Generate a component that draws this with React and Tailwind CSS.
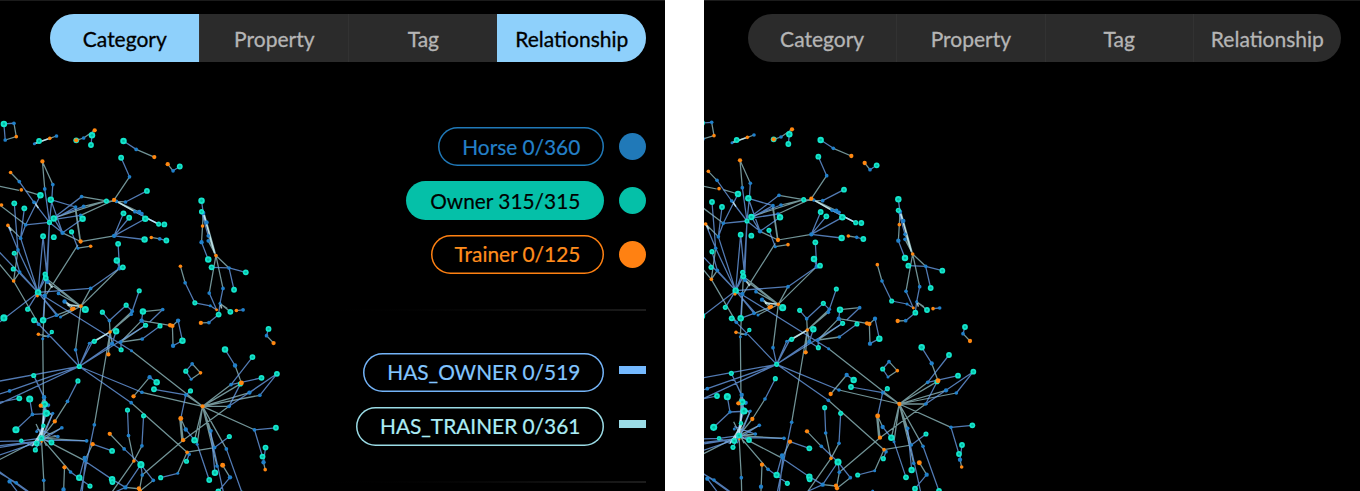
import React from "react";

// Edges are "x1 y1 x2 y2 [x3 y3 ...]" polylines.
const BLUE_EDGES = `
5 39 35 37|5 39 9 87|268 73 265 102|362 90 400 115|355 140 380 197|510 179 530 166
127 233 141 333|151 220 148 265 141 333|51 211 95 273 141 333|114 252 70 340|36 276 47 415|66 291 55 380|70 340 141 333|70 340 55 380
55 380 107 542|47 415 107 542|17 342 47 415|151 321 237 256|151 321 243 285|151 325 219 287|151 325 234 312|145 265 219 287|145 265 180 364|154 321 180 364|240 322 180 364|141 333 180 364
368 272 432 239|396 301 467 338|207 361 226 410|334 373 362 306|334 373 379 319|334 373 427 322|334 373 425 384|470 382 490 387
122 374 135 510|141 333 134 505|141 333 131 500|346 397 350 470|342 447 350 470|350 470 264 530|350 470 360 467|264 530 107 542
36 425 52 481|33 472 52 481|52 481 107 542|-10 420 107 542|128 487 107 542|130 499 107 542|107 542 76 592|107 542 -10 632|107 542 162 610|107 542 168 612|107 542 386 716|127 552 122 625|122 625 162 610|95 625 109 637|109 637 230 763|137 673 148 660|122 374 107 542
219 713 230 763|230 763 260 694|230 763 268 692|230 763 328 695|230 763 428 640|230 763 -10 807|230 763 22 836 -10 846|230 763 -10 875|230 763 417 840|230 763 385 871
320 626 299 601|320 626 370 580|388 598 409 537|385 607 409 537|370 580 388 598|328 695 340 658|354 690 355 713|328 695 355 713|418 681 471 642|420 599 416 626|416 626 428 640|479 593 440 630|525 626 538 686|510 701 538 686
595 268 600 305|595 301 610 333|595 392 615 444|625 467 677 469|677 469 727 482|677 469 692 534|618 544 640 594|659 530 650 575|650 575 646 608|646 608 617 632|699 596 719 594|546 513 575 573|575 573 621 582 640 594|595 301 615 373
795 651 789 671|665 712 695 760|747 735 683 817|774 797 683 817|820 785 769 849|820 785 677 882|820 785 738 841|711 815 677 882|567 755 548 777|548 777 564 801
753 952 817 946|753 952 777 1032|786 1005 780 1049|582 995 618 1102|623 955 635 1080|669 1009 717 1143|620 955 662 1146|634 1005 678 972|558 1025 550 1046|524 1082 473 1095
453 831 548 848|562 836 548 848|548 848 533 918|548 951 574 983|440 795 461 810|374 893 377 969|422 910 417 1000|364 1009 414 1056|414 1056 451 1103|414 1056 418 1087|414 1056 368 1124
226 806 195 867|94 790 125 855|94 790 138 885|82 860 90 906 41 952|90 906 150 903|51 858 -10 870|125 855 132 903|127 876 117 977|132 903 103 993|57 985 117 977|99 1012 117 977|147 990 117 977|252 985 135 983|270 995 328 1015|242 1042 328 1100|246 1036 230 1095|204 1078 262 1120|328 1100 368 1124|368 1124 325 1143|275 937 232 1146|248 1044 238 1146
57 985 -10 987|117 985 -10 1000|117 985 -10 1005|117 985 -10 1028|-10 1076 88 1146|-10 1080 42 1110 92 1146|22 1106 52 1146|178 946 103 993|166 972 103 950|151 903 112 1000|57 985 90 1000 117 977|680 1094 645 1136`;

const PALE_EDGES = `
35 37 42 77|42 77 9 87|96 98 142 82|142 82 162 75|221 88 243 81|243 81 276 58|400 115 454 138|380 197 334 266|494 159 510 179
120 151 127 233|120 151 151 220|25 184 51 211|-10 225 50 237|70 239 114 252|-10 279 70 340|17 342 55 380|237 256 311 269|243 285 311 269|234 312 334 266|151 321 311 269|311 269 368 272|334 266 396 301|334 266 409 302|409 302 427 322|396 301 467 338
219 287 234 390|217 287 232 385|180 364 234 390|226 410 264 404|234 390 334 373|226 400 132 548|445 378 470 382|350 470 235 583|264 530 235 583
52 481 34 508|47 415 34 508|-10 455 34 508|34 508 109 637|135 510 235 583|130 499 235 583|168 545 235 583|186 569 209 592|162 610 209 592|174 615 235 583|235 583 195 577|130 500 124 625|124 625 121 680|121 680 123 860|108 667 137 673
235 583 219 713|322 660 320 626|322 660 385 607|322 660 388 598|322 660 260 694|322 660 275 688|322 660 317 727|322 660 328 695|322 660 275 937|354 690 416 626|354 690 428 640|354 690 418 681|420 599 479 593|416 626 501 640|508 642 525 626|508 642 510 701
386 716 598 882|417 840 598 882|385 871 552 1019|598 344 595 392|600 305 638 432|604 310 638 432|610 333 638 432|615 373 638 432|615 388 638 432|600 305 598 344|638 432 677 469|638 432 659 530|638 432 618 544|650 575 681 600|650 575 672 590|617 632 593 633|532 464 546 513|789 671 810 693
695 760 714 812|683 817 598 882|738 841 598 882|769 849 598 882|683 882 598 882|677 882 540 983|711 815 598 882|567 755 592 782|592 782 564 801|598 882 753 952|598 882 574 983|598 882 582 995|598 882 623 955|598 882 641 1060|598 882 669 1009|598 882 634 1005|598 882 548 848|552 1019 634 1005|552 1019 558 1025|552 1019 524 1082|533 918 548 951|533 918 540 983|530 918 536 983|540 983 418 1087 410 1130|780 1049 785 1071
392 852 440 795|377 969 393 1045|417 1000 393 1045|321 964 364 1009|393 1045 322 1146|418 1087 410 1130|451 1103 411 1135|368 1124 408 1128|195 867 157 927|157 927 117 977|117 977 252 985|117 977 242 1042|117 977 204 1078|117 977 124 1103 125 1146|117 977 178 946|117 977 166 972|117 977 151 903|117 977 125 855|117 977 -10 1042|120 977 128 850|186 1064 183 1143|270 995 248 1040|115 880 125 855|115 880 150 910|658 1058 680 1094|123 860 123 977|101 935 132 1000`;

const BRIGHT_EDGES = `96 98 142 82|334 266 396 301|425 317 467 338|602 310 634 425|322 660 275 688|190 570 209 585|195 580 235 583|123 940 103 993|90 1000 125 945|95 270 108 290|117 977 126 900|17 342 27 358|135 510 150 528|650 572 655 590`;

// Nodes are "x y radius" triples.
const TEAL_NODES = `5 39 9|110 90 8|221 88 8|268 73 9|265 102 8|362 90 9|355 140 8|530 166 8|114 252 9|145 265 9|36 276 8|66 291 8|141 333 7|154 321 9|311 269 7|432 239 8|240 322 9|362 306 8|379 319 8|427 322 9|425 384 9|467 338 7|484 339 8|490 387 8|207 361 7|122 374 8|154 377 8|346 397 8|342 447 9|360 467 8|36 425 7|33 472 7|128 487 7|130 499 8|107 542 9|76 592 7|5 618 10|95 625 8|122 625 9|248 593 10|148 660 6|230 763 7|275 688 7|299 601 7|370 580 7|409 537 7|340 658 9|355 713 7|420 599 9|428 640 7|471 642 7|538 686 9|595 268 9|595 301 7|615 444 9|625 467 8|727 482 8|692 534 8|646 608 8|681 600 8|575 573 7|795 651 8|665 712 9|747 735 8|774 797 8|820 785 8|711 815 7|548 777 7|562 836 7|453 831 8|461 810 9|817 946 8|786 1005 8|777 1032 8|618 1102 8|574 983 9|635 1080 9|678 972 7|550 1046 7|473 1095 7|374 893 7|422 910 7|414 1056 10|226 806 7|94 790 7|82 860 10|41 952 10|51 858 8|127 876 9|132 903 10|123 940 6|117 977 8|147 990 8|57 985 6|103 993 8|99 1012 7|328 1015 8|328 1100 9|329 1108 8|230 1095 9|262 1120 7|645 1136 8|717 1143 8`;

const BLUE_NODES = `35 37 5|9 87 5|96 98 4|162 75 5|243 81 5|400 115 5|380 197 5|510 179 5|127 233 5|151 220 5|51 211 5|95 273 5|70 340 5|55 380 5|47 415 5|237 256 5|243 285 5|219 287 5|234 312 5|368 272 5|341 270 5|396 301 5|409 302 6|417 307 5|180 364 6|226 410 4|334 373 6|470 382 5|350 470 6|264 530 5|52 481 5|135 510 6|127 552 6|168 545 5|186 569 6|162 610 5|174 615 4|109 637 5|121 680 4|137 673 4|219 713 5|260 694 4|270 690 4|320 626 5|328 695 6|354 690 5|388 598 5|385 607 5|418 681 5|386 716 4|479 593 5|416 626 6|525 626 6|510 701 6|600 305 6|610 333 6|595 392 6|615 373 5|615 388 5|677 469 5|659 530 5|618 544 5|650 575 4|621 582 4|719 594 5|617 632 5|546 513 5|789 671 5|695 760 6|683 817 5|769 849 5|677 882 5|738 841 6|567 755 5|564 801 4|753 952 5|780 1049 6|582 995 4|623 955 5|641 1060 5|669 1009 5|634 1005 5|558 1025 5|524 1082 4|548 848 5|548 951 6|440 795 6|377 969 5|417 1000 5|364 1009 5|451 1103 5|418 1087 5|368 1124 6|195 867 5|125 855 6|138 878 5|90 906 5|178 946 5|166 972 5|151 903 4|103 957 4|252 985 5|246 1036 6|248 1044 5|204 1078 5|124 1103 5|183 1130 6|275 937 5|417 840 5|385 871 5|22 836 5|22 1106 6|42 1110 5|680 1094 6|518 1143 4`;

const ORANGE_NODES = `42 77 5|142 82 5|221 88 6|276 58 6|454 138 6|494 159 6|120 151 6|25 184 5|57 236 5|-2 281 5|17 342 5|334 266 6|234 390 6|264 404 5|445 378 5|34 508 5|105 553 4|235 583 5|209 592 6|214 590 5|108 667 5|322 660 5|317 727 6|501 640 6|508 642 6|598 344 5|638 432 5|640 594 4|699 596 5|593 633 6|532 464 5|810 693 6|714 812 7|592 782 5|598 882 6|785 1071 5|552 1019 5|540 983 6|533 918 7|392 852 6|321 964 6|393 1045 5|408 1127 6|411 1135 6|157 927 6|115 880 6|270 995 6|186 1064 6|658 1058 7|118 988 3`;

const rows = (text) => text.trim().split(/[|\n]/).map((r) => r.trim());
const toPath = (text) => rows(text).map((r) => "M" + r).join("");
const nodes = (text) => rows(text).map((r) => r.split(" ").map(Number));

const bluePath = toPath(BLUE_EDGES);
const palePath = toPath(PALE_EDGES);
const brightPath = toPath(BRIGHT_EDGES);

function Graph({ viewBox }) {
  return (
    <svg viewBox={viewBox} className="block h-[491px] w-[290px] shrink-0" aria-hidden="true">
      <g fill="none" strokeLinejoin="round">
        <path d={palePath} stroke="#a1d2d6" strokeOpacity="0.7" strokeWidth="3.8" />
        <path d={bluePath} stroke="#6ea5f2" strokeOpacity="0.74" strokeWidth="3.8" />
        <path d={brightPath} stroke="#d9fbff" strokeOpacity="0.75" strokeWidth="4.5" />
      </g>
      {nodes(BLUE_NODES).map(([x, y, r], i) => (
        <circle key={i} cx={x} cy={y} r={r + 0.5} fill="#2080cb" />
      ))}
      {nodes(TEAL_NODES).map(([x, y, r], i) => (
        <g key={i}>
          <circle cx={x} cy={y} r={r + 0.7} fill="#14e6cd" />
          <circle cx={x} cy={y} r={r * 0.45} fill="#03bda3" />
        </g>
      ))}
      {nodes(ORANGE_NODES).map(([x, y, r], i) => (
        <circle key={i} cx={x} cy={y} r={r + 0.4} fill="#ff8710" />
      ))}
    </svg>
  );
}

const TABS = ["Category", "Property", "Tag", "Relationship"];

function TabBar({ selected = [], className }) {
  return (
    <div className={`grid grid-cols-4 overflow-hidden rounded-full bg-[#2b2b2b] text-[21px] ${className}`}>
      {TABS.map((tab, i) => (
        <button
          key={tab}
          className={`pt-[2px] text-center whitespace-nowrap [-webkit-text-stroke:0.3px] ${
            selected.includes(tab)
              ? "bg-[#8ed0fb] text-black"
              : `text-[#b5b5b5] ${i ? "border-l border-[#323232]" : ""}`
          }`}
        >
          {tab}
        </button>
      ))}
    </div>
  );
}

function LegendRow({ label, pill, swatch }) {
  return (
    <div className="flex h-[39px] items-center justify-end gap-[15px]">
      <div
        className={`flex h-[39px] items-center rounded-full px-[24px] whitespace-nowrap [-webkit-text-stroke:0.2px] ${pill}`}
      >
        {label}
      </div>
      <div className={`w-[27px] ${swatch}`} />
    </div>
  );
}

function Divider() {
  return <div className="h-[2px] w-[380px] self-end bg-linear-to-r from-black to-[#1c1c1c]" />;
}

export default function App() {
  return (
    <div className="flex h-[491px] w-[1360px] justify-between overflow-hidden bg-white font-['Lato',sans-serif] text-[20.85px] leading-[26px]">
      <section className="grid w-[665px] grid-cols-1 grid-rows-1 overflow-hidden bg-black">
        <div className="col-start-1 row-start-1">
          <Graph viewBox="-6.6 -330.9 865.65 1465.6" />
        </div>
        <div className="col-start-1 row-start-1 flex flex-col border-t border-[#1b1b1b] pr-[18.7px]">
          <TabBar selected={["Category", "Relationship"]} className="mt-[13.2px] h-[47.8px] w-[596px] shrink-0 self-end" />
          <div className="mt-[65.4px] flex flex-col gap-[14.7px]">
            <LegendRow
              label="Horse 0/360"
              pill="shadow-[inset_0_0_0_1.5px_#2079b8] text-[#2480c8]"
              swatch="h-[27px] rounded-full bg-[#2079b8]"
            />
            <LegendRow
              label="Owner 315/315"
              pill="bg-[#05c0a8] text-black"
              swatch="h-[27px] rounded-full bg-[#05c0a8]"
            />
            <LegendRow
              label="Trainer 0/125"
              pill="shadow-[inset_0_0_0_1.5px_#ff8112] text-[#ff8d1d]"
              swatch="h-[27px] rounded-full bg-[#ff8112]"
            />
          </div>
          <div className="mt-[35.6px] flex flex-col">
            <Divider />
          </div>
          <div className="mt-[41.6px] flex flex-col gap-[14.7px]">
            <LegendRow
              label="HAS_OWNER 0/519"
              pill="shadow-[inset_0_0_0_1.5px_#74b4f8] text-[#83c6ff]"
              swatch="mb-[5px] h-[8px] bg-[#74b9ff]"
            />
            <LegendRow
              label="HAS_TRAINER 0/361"
              pill="shadow-[inset_0_0_0_1.5px_#9bdce6] text-[#acedf5]"
              swatch="mb-[5px] h-[8px] bg-[#9bdce6]"
            />
          </div>
          <div className="mt-[35.3px] flex flex-col">
            <Divider />
          </div>
        </div>
      </section>
      <section className="grid w-[656px] grid-cols-1 grid-rows-1 overflow-hidden bg-black">
        <div className="col-start-1 row-start-1">
          <Graph viewBox="12 -330 870 1473" />
        </div>
        <div className="col-start-1 row-start-1 flex flex-col border-t border-[#1b1b1b] pr-[19px]">
          <TabBar className="mt-[13px] h-[47.5px] w-[593px] shrink-0 self-end" />
        </div>
      </section>
    </div>
  );
}
